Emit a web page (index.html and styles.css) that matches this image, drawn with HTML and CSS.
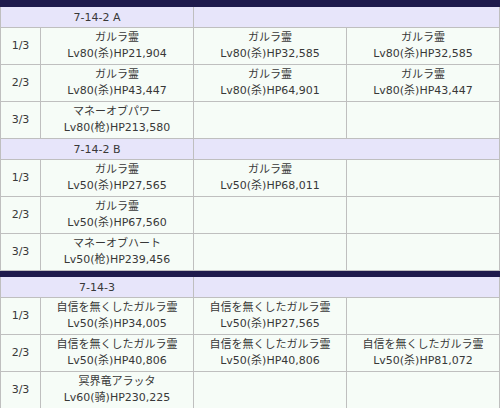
FILE: index.html
```html
<!DOCTYPE html>
<html lang="ja">
<head>
<meta charset="utf-8">
<link rel="stylesheet" href="styles.css">
</head>
<body>
<table class="waves">
  <colgroup><col class="c-no"><col class="c-e"><col class="c-e"><col class="c-e"></colgroup>
  <tr class="bar"><td colspan="4"></td></tr>
  <tr class="head"><th colspan="2">7-14-2 A</th><th colspan="2"></th></tr>
  <tr><td class="no">1/3</td><td><div>ガルラ霊</div><div>Lv80(杀)HP21,904</div></td><td><div>ガルラ霊</div><div>Lv80(杀)HP32,585</div></td><td><div>ガルラ霊</div><div>Lv80(杀)HP32,585</div></td></tr>
  <tr><td class="no">2/3</td><td><div>ガルラ霊</div><div>Lv80(杀)HP43,447</div></td><td><div>ガルラ霊</div><div>Lv80(杀)HP64,901</div></td><td><div>ガルラ霊</div><div>Lv80(杀)HP43,447</div></td></tr>
  <tr><td class="no">3/3</td><td><div>マネーオブパワー</div><div>Lv80(枪)HP213,580</div></td><td></td><td></td></tr>
  <tr class="head"><th colspan="2">7-14-2 B</th><th colspan="2"></th></tr>
  <tr><td class="no">1/3</td><td><div>ガルラ霊</div><div>Lv50(杀)HP27,565</div></td><td><div>ガルラ霊</div><div>Lv50(杀)HP68,011</div></td><td></td></tr>
  <tr><td class="no">2/3</td><td><div>ガルラ霊</div><div>Lv50(杀)HP67,560</div></td><td></td><td></td></tr>
  <tr><td class="no">3/3</td><td><div>マネーオブハート</div><div>Lv50(枪)HP239,456</div></td><td></td><td></td></tr>
  <tr class="bar"><td colspan="4"></td></tr>
  <tr class="head"><th colspan="2">7-14-3</th><th colspan="2"></th></tr>
  <tr><td class="no">1/3</td><td><div>自信を無くしたガルラ霊</div><div>Lv50(杀)HP34,005</div></td><td><div>自信を無くしたガルラ霊</div><div>Lv50(杀)HP27,565</div></td><td></td></tr>
  <tr><td class="no">2/3</td><td><div>自信を無くしたガルラ霊</div><div>Lv50(杀)HP40,806</div></td><td><div>自信を無くしたガルラ霊</div><div>Lv50(杀)HP40,806</div></td><td><div>自信を無くしたガルラ霊</div><div>Lv50(杀)HP81,072</div></td></tr>
  <tr><td class="no">3/3</td><td><div>冥界竜アラッタ</div><div>Lv60(骑)HP230,225</div></td><td></td><td></td></tr>
</table>
</body>
</html>
```
FILE: styles.css
```css
html, body {
  margin: 0;
  padding: 0;
  background: #ffffff;
}
.waves {
  width: 500px;
  table-layout: fixed;
  border-collapse: collapse;
  font-family: "DejaVu Sans", "Noto Sans CJK JP", sans-serif;
  font-size: 11px;
  line-height: 16px;
  color: #383838;
}
.c-no { width: 40px; }
.c-e { width: 153px; }
.waves td, .waves th {
  border: 1px solid #bfbfbf;
  text-align: center;
  vertical-align: middle;
  padding: 0;
  background: #f6fcf7;
  font-weight: normal;
  white-space: nowrap;
}
.waves tr { height: 37px; }
.waves tr.head { height: 21px; }
.waves tr.head th {
  background: #e7e5fa;
  line-height: 19px;
}
.waves tr.bar { height: 6px; }
.waves tr.bar td {
  background: #1e1a4c;
  border-color: #1e1a4c;
  height: 4px;
  padding: 0;
  line-height: 0;
  font-size: 0;
}
```
